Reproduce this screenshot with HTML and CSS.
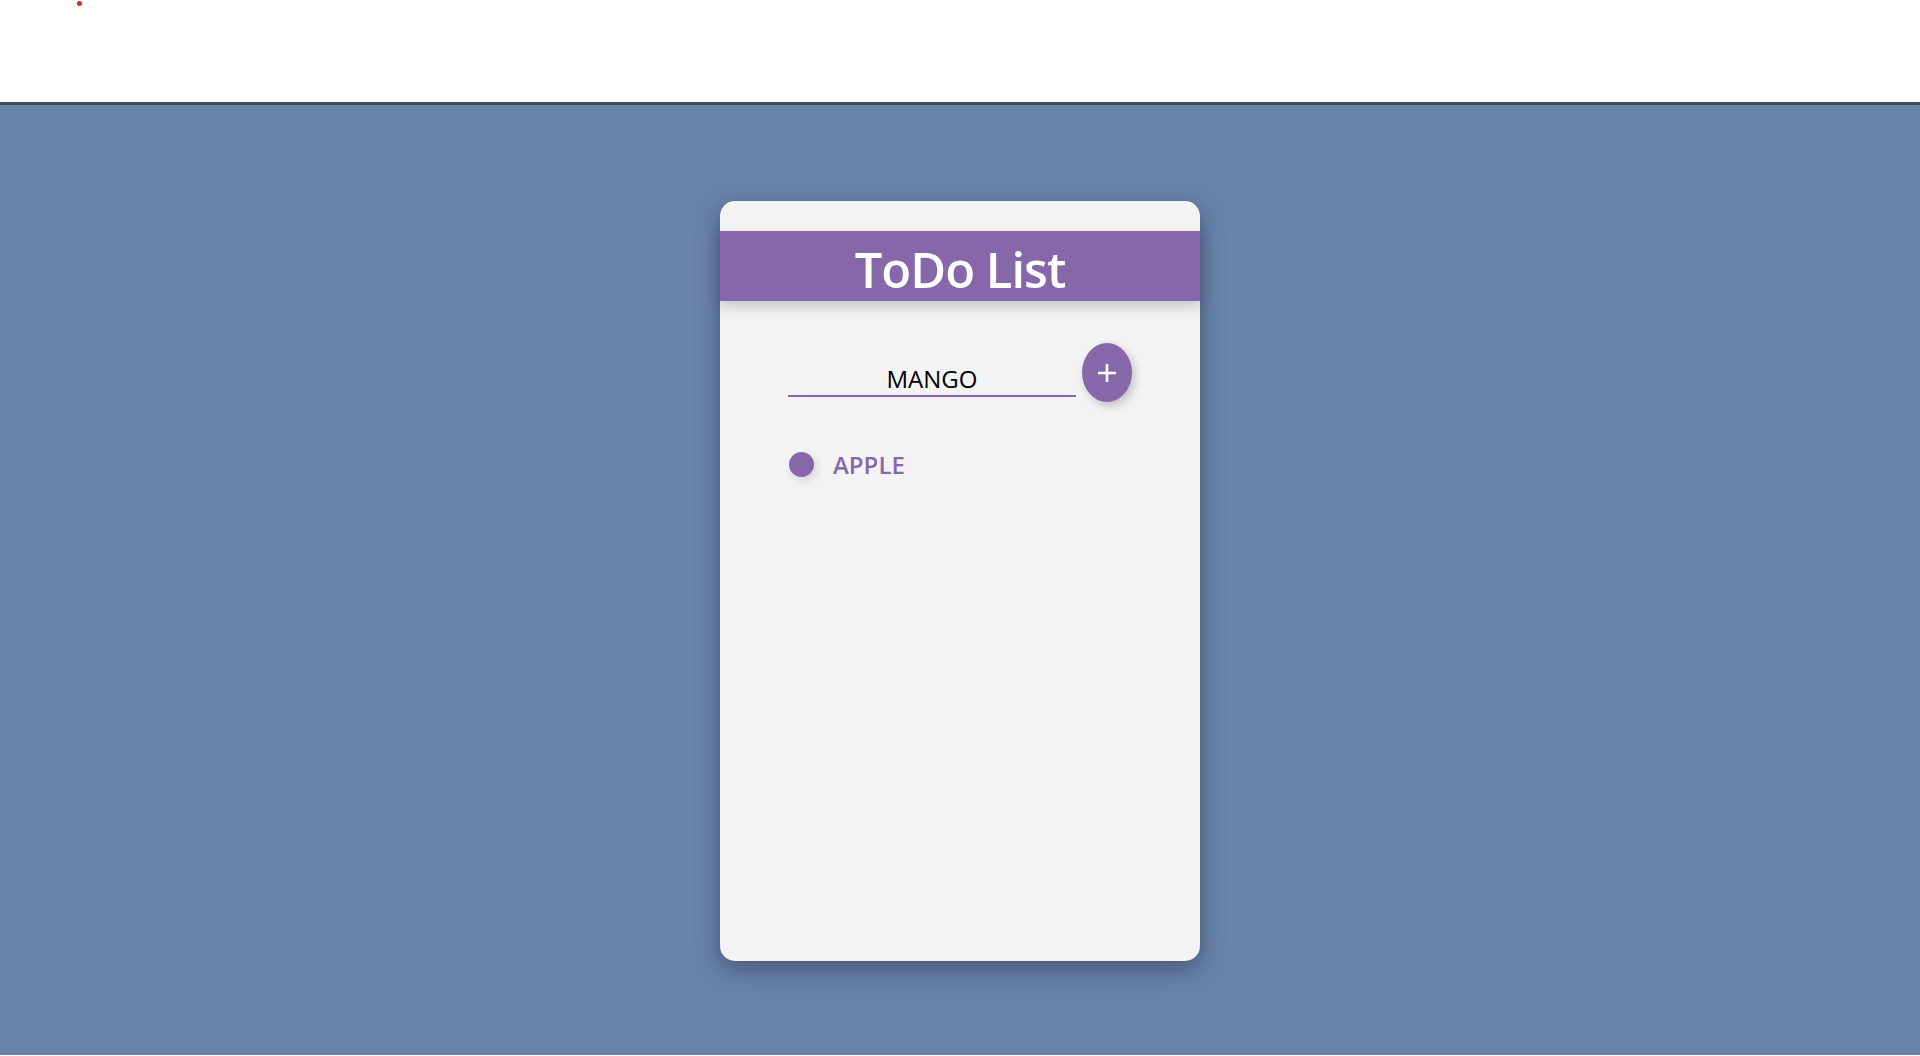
FILE: index.html
```html
<!DOCTYPE html>
<html>
<head>
<meta charset="utf-8">
<link rel="stylesheet" href="styles.css">
</head>
<body>
<div class="top"><span class="dot"></span></div>
<main class="stage">
  <div class="card">
    <div class="card-head">ToDo List</div>
    <div class="entry">
      <div class="field">MANGO</div>
      <button class="add" type="button">
        <svg width="22" height="22" viewBox="0 0 22 22"><path d="M11 2V20M2 11H20" stroke="#fff" stroke-width="2.6"/></svg>
      </button>
    </div>
    <ul class="items">
      <li class="item"><span class="bullet"></span><span class="label">APPLE</span></li>
    </ul>
  </div>
</main>
</body>
</html>
```

FILE: styles.css
```css
html, body {
  margin: 0;
  padding: 0;
  background: #ffffff;
  font-family: "Open Sans", "Noto Sans", sans-serif;
}
.top {
  height: 102px;
  position: relative;
}
.dot {
  position: absolute;
  left: 77px;
  top: 1px;
  width: 5px;
  height: 5px;
  border-radius: 50%;
  background: #e0202a;
}
.stage {
  border-top: 3px solid #3f5059;
  background: #6a83aa;
  height: 950px;
  display: flex;
  justify-content: center;
  align-items: flex-start;
}
.card {
  margin-top: 96px;
  width: 480px;
  height: 760px;
  background: #f3f3f3;
  border-radius: 15px;
  box-shadow: 0 8px 24px rgba(40, 50, 80, 0.55);
  padding-top: 30px;
  box-sizing: border-box;
}
.card-head {
  height: 70px;
  background: #8667aa;
  color: #ffffff;
  font-size: 49px;
  font-weight: 600;
  text-align: center;
  line-height: 76px;
  letter-spacing: -1px;
  box-shadow: 0 6px 12px rgba(0, 0, 0, 0.18);
}
.entry {
  margin-top: 42px;
  display: flex;
  justify-content: center;
  align-items: flex-start;
  gap: 6px;
}
.field {
  width: 288px;
  height: 54px;
  border-bottom: 2px solid #8667aa;
  box-sizing: border-box;
  text-align: center;
  font-size: 24px;
  font-weight: 500;
  color: #000;
  line-height: 28px;
  padding-top: 22px;
}
.add {
  width: 50px;
  height: 59px;
  border: none;
  border-radius: 50%;
  background: #8667aa;
  box-shadow: 3px 4px 10px rgba(0, 0, 0, 0.2);
  display: flex;
  align-items: center;
  justify-content: center;
  padding: 0;
}
.items {
  list-style: none;
  margin: 46px 0 0 0;
  padding: 0 0 0 69px;
}
.item {
  display: flex;
  align-items: center;
  gap: 19px;
}
.bullet {
  width: 25px;
  height: 25px;
  border-radius: 50%;
  background: #8667aa;
  box-shadow: 3px 4px 8px rgba(0, 0, 0, 0.12);
}
.label {
  color: #8667aa;
  font-size: 24px;
  font-weight: 600;
}
```
